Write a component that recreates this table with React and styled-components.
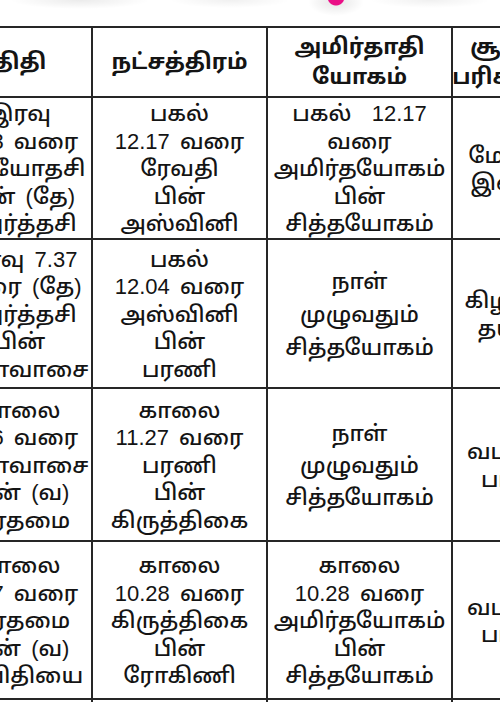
import React from "react";
import styled, { createGlobalStyle } from "styled-components";

const GlobalStyle = createGlobalStyle`
  html, body { margin: 0; padding: 0; background: #ffffff; }
  * { box-sizing: border-box; }
`;

const Page = styled.div`
  width: 500px;
  height: 702px;
  overflow: hidden;
  background: #ffffff;
`;

const Banner = styled.div`
  height: 26px;
  background:
    radial-gradient(circle 10px at 336px -3px, #ea0f86 0 8px, rgba(234,15,134,0) 9px),
    radial-gradient(ellipse 28px 14px at 336px 2px, rgba(0,0,0,0.10), rgba(0,0,0,0) 100%),
    radial-gradient(ellipse 70px 9px at 80px 0px, rgba(0,0,0,0.08), rgba(0,0,0,0) 100%),
    radial-gradient(ellipse 60px 8px at 230px 0px, rgba(0,0,0,0.06), rgba(0,0,0,0) 100%),
    radial-gradient(ellipse 60px 8px at 430px 0px, rgba(0,0,0,0.06), rgba(0,0,0,0) 100%),
    #ffffff;
`;

const Table = styled.div`
  display: grid;
  grid-template-columns: 145px 175px 185px 112px;
  grid-template-rows: 70px 142px 149px 153px 158px 40px;
  margin-left: -52px;
  width: 617px;
  border-top: 2px solid #262626;
  font-family: "Liberation Sans", "Noto Sans Tamil", "Lohit Tamil", "Noto Sans", sans-serif;
  color: #141414;
`;

const Cell = styled.div`
  display: flex;
  flex-direction: column;
  justify-content: center;
  align-items: center;
  text-align: center;
  white-space: pre;
  border-right: 2px solid #262626;
  border-bottom: 2px solid #262626;
  font-size: 22px;
  font-weight: ${(p) => (p.$head ? 700 : 500)};
  word-spacing: ${(p) => (p.$head ? "0" : "4px")};
  line-height: ${(p) => p.$lh || (p.$head ? "30px" : "27.5px")};
  padding-top: ${(p) => (p.$head ? "0" : "2px")};
`;

const Line = styled.span`
  display: block;
`;

const header = [
  ["திதி"],
  ["நட்சத்திரம்"],
  ["அமிர்தாதி", "யோகம்"],
  ["சூலம்", "பரிகாரம்"],
];

const rows = [
  [
    { lines: ["இரவு", "9.33 வரை", "திரயோதசி", "பின் (தே)", "சதுர்த்தசி"] },
    { lines: ["பகல்", "12.17 வரை", "ரேவதி", "பின்", "அஸ்வினி"] },
    { lines: ["பகல்  12.17", "வரை", "அமிர்தயோகம்", "பின்", "சித்தயோகம்"] },
    { lines: ["மேற்கு", "இலை"] },
  ],
  [
    { lines: ["இரவு 7.37", "வரை (தே)", "சதுர்த்தசி", "பின்", "அமாவாசை"] },
    { lines: ["பகல்", "12.04 வரை", "அஸ்வினி", "பின்", "பரணி"] },
    { lines: ["நாள்", "முழுவதும்", "சித்தயோகம்"], lh: "33px" },
    { lines: ["கிழக்கு", "தயிர்"] },
  ],
  [
    { lines: ["காலை", "5.56 வரை", "அமாவாசை", "பின் (வ)", "பிரதமை"] },
    { lines: ["காலை", "11.27 வரை", "பரணி", "பின்", "கிருத்திகை"] },
    { lines: ["நாள்", "முழுவதும்", "சித்தயோகம்"], lh: "32px" },
    { lines: ["வடக்கு", "பால்"] },
  ],
  [
    { lines: ["காலை", "4.17 வரை", "பிரதமை", "பின் (வ)", "துவிதியை"] },
    { lines: ["காலை", "10.28 வரை", "கிருத்திகை", "பின்", "ரோகிணி"] },
    { lines: ["காலை", "10.28 வரை", "அமிர்தயோகம்", "பின்", "சித்தயோகம்"] },
    { lines: ["வடக்கு", "பால்"] },
  ],
];

export default function App() {
  return (
    <>
      <GlobalStyle />
      <Page>
        <Banner />
        <Table>
          {header.map((h, i) => (
            <Cell key={"h" + i} $head>
              {h.map((l, j) => (
                <Line key={j}>{l}</Line>
              ))}
            </Cell>
          ))}
          {rows.map((r, ri) =>
            r.map((c, ci) => (
              <Cell key={ri + "-" + ci} $lh={c.lh}>
                {c.lines.map((l, j) => (
                  <Line key={j}>{l}</Line>
                ))}
              </Cell>
            ))
          )}
          {[0, 1, 2, 3].map((i) => (
            <Cell key={"e" + i} />
          ))}
        </Table>
      </Page>
    </>
  );
}
